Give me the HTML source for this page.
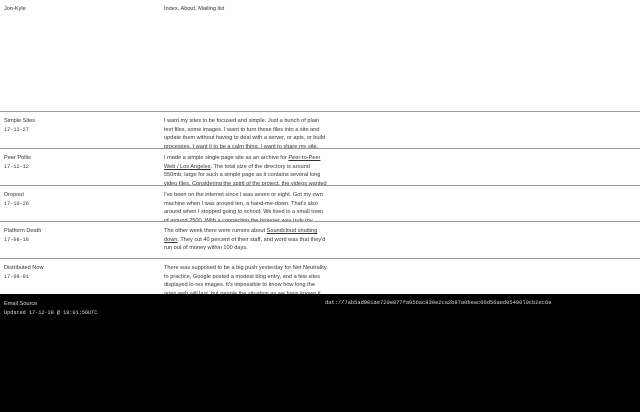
<!DOCTYPE html>
<html><head><style>
*{margin:0;padding:0;box-sizing:border-box}
body{width:640px;height:412px;overflow:hidden;background:#fff;font-family:"Liberation Sans",sans-serif;font-size:5.6px;color:#333;position:relative}
.top{position:absolute;top:5px;left:4px;line-height:8px}
.nav{position:absolute;top:5px;left:164px;line-height:8px}
.row{position:absolute;left:0;width:640px;height:37px;border-top:1px solid #999;overflow:hidden}
.row .l{position:absolute;left:4px;top:5px;line-height:8.7px}
.row .r{position:absolute;left:164px;top:5px;width:164px;line-height:8.7px;height:31px;overflow:hidden}
.mono{font-family:"Liberation Mono",monospace;font-size:5.2px}
u{text-decoration:underline}
.foot{position:absolute;top:294px;left:0;width:640px;height:118px;background:#000;color:#ddd}
</style></head><body>
<div class="top">Jon-Kyle</div>
<div class="nav">Index, About, Mailing list</div>
<div class="row" style="top:111px"><div class="l">Simple Sites<br><span class="mono">17-12-27</span></div><div class="r">I want my sites to be focused and simple. Just a bunch of plain text files, some images. I want to turn those files into a site and update them without having to deal with a server, or apis, or build processes. I want it to be a calm thing. I want to share my site.</div></div>
<div class="row" style="top:148px"><div class="l">Peer Pollis<br><span class="mono">17-12-12</span></div><div class="r">I made a simple single page site as an archive for <u>Peer-to-Peer Web / Los Angeles</u>. The total size of the directory is around 550mb; large for such a simple page as it contains several long video files. Considering the spirit of the project, the videos wanted</div></div>
<div class="row" style="top:185px"><div class="l">Dropout<br><span class="mono">17-10-26</span></div><div class="r">I've been on the internet since I was seven or eight. Got my own machine when I was around ten, a hand-me-down. That's also around when I stopped going to school. We lived in a small town of around 2500. With a connection the browser was truly my</div></div>
<div class="row" style="top:221px;height:37px"><div class="l">Platform Death<br><span class="mono">17-08-18</span></div><div class="r">The other week there were rumors about <u>Soundcloud shutting down</u>. They cut 40 percent of their staff, and word was that they'd run out of money within 100 days.</div></div>
<div class="row" style="top:258px"><div class="l">Distributed Now<br><span class="mono">17-08-01</span></div><div class="r">There was supposed to be a big push yesterday for Net Neutrality. In practice, Google posted a modest blog entry, and a few sites displayed lo-res images. It's impossible to know how long the open web will last, but people the situation as we have known it and</div></div>
<div class="foot">
<div style="position:absolute;left:4px;top:6px;line-height:9px">Email Source<br><span class="mono">Updated 17-12-28 @ 18:01:56UTC</span></div>
<div class="mono" style="position:absolute;left:325px;top:6px;font-size:5.4px">dat://7ab5ad001ae720e877fa056ac830e2ca2b87a0beac06d56aed05400l0cb2ec6e</div>
</div>
</body></html>
